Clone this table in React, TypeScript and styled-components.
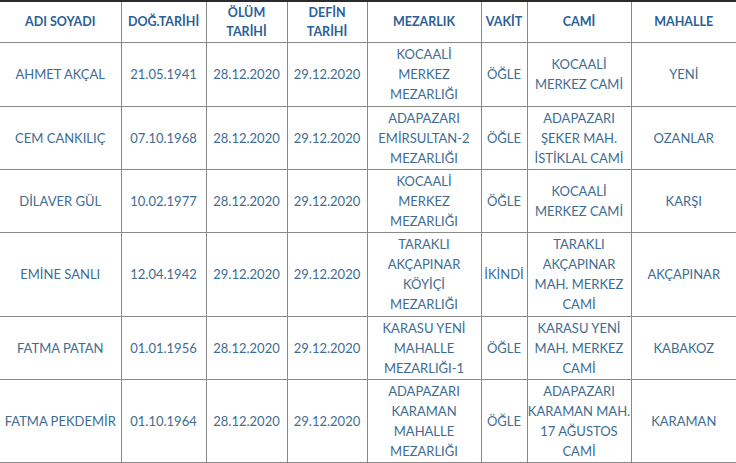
import React from "react";
import styled, { createGlobalStyle } from "styled-components";

const Global = createGlobalStyle`
  html, body {
    margin: 0;
    padding: 0;
    background: #fff;
    font-family: Lato, "Open Sans", sans-serif;
  }
`;

const Table = styled.table`
  width: 736px;
  table-layout: fixed;
  border-collapse: collapse;
  border-top: 2px solid #2b2b2b;
  font-size: 13px;
  line-height: 20px;
`;

const HeadRow = styled.tr`
  height: 41px;
`;

const Th = styled.th`
  color: #2a5f98;
  font-size: 12.5px;
  font-weight: 700;
  line-height: 19px;
  text-align: center;
  padding: 0 1px;
  border-bottom: 1px solid #8a8a8a;
  & + & {
    border-left: 1px solid #8a8a8a;
  }
`;

const Td = styled.td<{ $pad: number }>`
  color: #3e6c92;
  text-align: center;
  padding: 1px ${(p) => p.$pad}px;
  border-bottom: 1px solid #8a8a8a;
  & + & {
    border-left: 1px solid #8a8a8a;
  }
`;

const Row = styled.tr<{ $h: number }>`
  height: ${(p) => p.$h}px;
`;

const columns = [
  { title: "ADI SOYADI", width: 121, pad: 2 },
  { title: "DOĞ.TARİHİ", width: 85, pad: 2 },
  { title: "ÖLÜM TARİHİ", width: 81, pad: 2 },
  { title: "DEFİN TARİHİ", width: 80, pad: 2 },
  { title: "MEZARLIK", width: 114, pad: 6 },
  { title: "VAKİT", width: 46, pad: 0 },
  { title: "CAMİ", width: 104, pad: 0 },
  { title: "MAHALLE", width: 105, pad: 4 },
];

const rows: { h: number; cells: string[] }[] = [
  {
    h: 64,
    cells: ["AHMET AKÇAL", "21.05.1941", "28.12.2020", "29.12.2020", "KOCAALİ MERKEZ MEZARLIĞI", "ÖĞLE", "KOCAALİ MERKEZ CAMİ", "YENİ"],
  },
  {
    h: 63,
    cells: ["CEM CANKILIÇ", "07.10.1968", "28.12.2020", "29.12.2020", "ADAPAZARI EMİRSULTAN-2 MEZARLIĞI", "ÖĞLE", "ADAPAZARI ŞEKER MAH. İSTİKLAL CAMİ", "OZANLAR"],
  },
  {
    h: 63,
    cells: ["DİLAVER GÜL", "10.02.1977", "28.12.2020", "29.12.2020", "KOCAALİ MERKEZ MEZARLIĞI", "ÖĞLE", "KOCAALİ MERKEZ CAMİ", "KARŞI"],
  },
  {
    h: 84,
    cells: ["EMİNE SANLI", "12.04.1942", "29.12.2020", "29.12.2020", "TARAKLI AKÇAPINAR KÖYİÇİ MEZARLIĞI", "İKİNDİ", "TARAKLI AKÇAPINAR MAH. MERKEZ CAMİ", "AKÇAPINAR"],
  },
  {
    h: 63,
    cells: ["FATMA PATAN", "01.01.1956", "28.12.2020", "29.12.2020", "KARASU YENİ MAHALLE MEZARLIĞI-1", "ÖĞLE", "KARASU YENİ MAH. MERKEZ CAMİ", "KABAKOZ"],
  },
  {
    h: 81,
    cells: ["FATMA PEKDEMİR", "01.10.1964", "28.12.2020", "29.12.2020", "ADAPAZARI KARAMAN MAHALLE MEZARLIĞI", "ÖĞLE", "ADAPAZARI KARAMAN MAH. 17 AĞUSTOS CAMİ", "KARAMAN"],
  },
];

export default function App() {
  return (
    <>
      <Global />
      <Table>
        <colgroup>
          {columns.map((c) => (
            <col key={c.title} style={{ width: c.width }} />
          ))}
        </colgroup>
        <thead>
          <HeadRow>
            {columns.map((c) => (
              <Th key={c.title}>{c.title}</Th>
            ))}
          </HeadRow>
        </thead>
        <tbody>
          {rows.map((r) => (
            <Row key={r.cells[0]} $h={r.h}>
              {r.cells.map((text, i) => (
                <Td key={i} $pad={columns[i].pad}>
                  {text}
                </Td>
              ))}
            </Row>
          ))}
        </tbody>
      </Table>
    </>
  );
}
